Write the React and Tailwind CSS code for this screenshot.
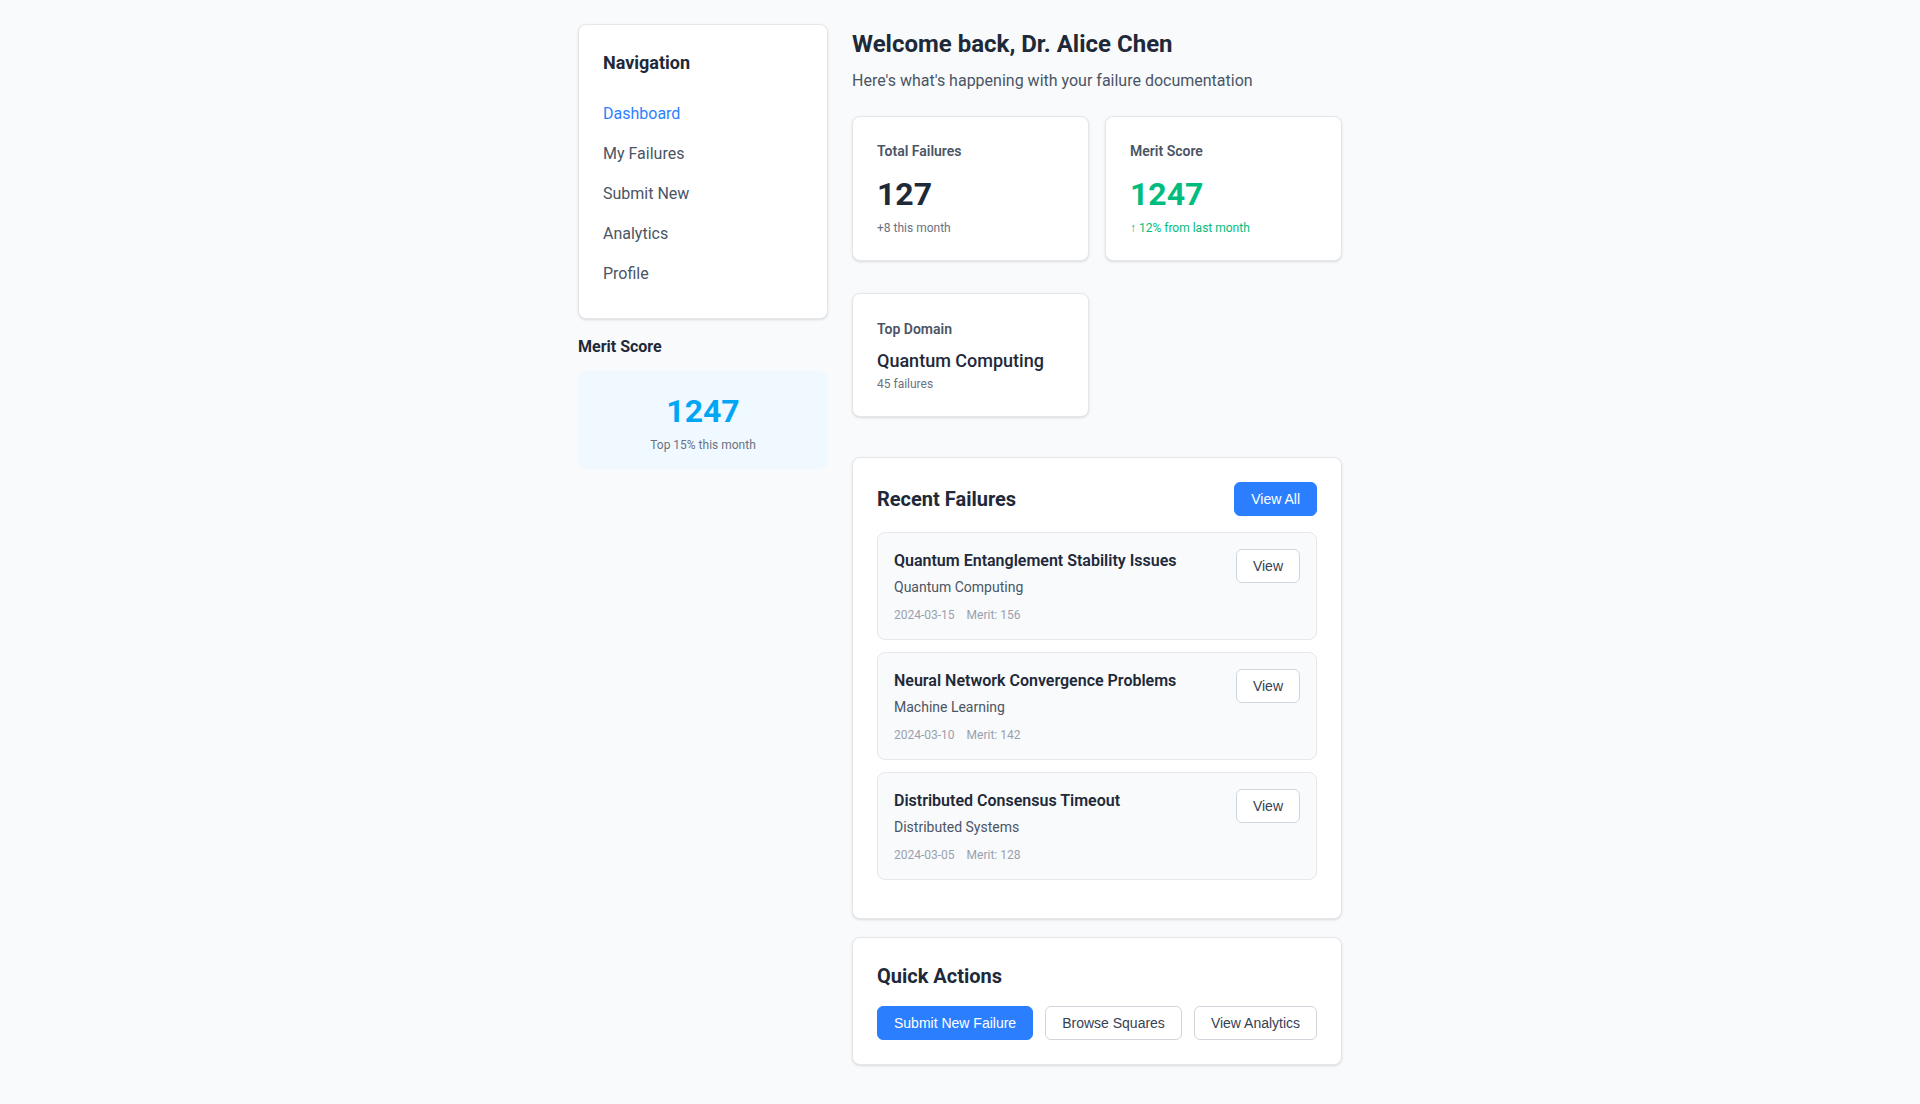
import React from "react";

const failures = [
  { title: "Quantum Entanglement Stability Issues", domain: "Quantum Computing", date: "2024-03-15", merit: 156 },
  { title: "Neural Network Convergence Problems", domain: "Machine Learning", date: "2024-03-10", merit: 142 },
  { title: "Distributed Consensus Timeout", domain: "Distributed Systems", date: "2024-03-05", merit: 128 },
];

const navItems = ["Dashboard", "My Failures", "Submit New", "Analytics", "Profile"];

export default function App() {
  return (
    <div className="min-h-screen bg-gray-50 text-gray-800 font-['Roboto','Noto_Sans',sans-serif]">
      <div className="mx-auto flex w-[764px] gap-6 pt-6 pb-10">
        <aside className="w-[250px] shrink-0">
          <div className="rounded-lg border border-gray-200 bg-white p-6 shadow-sm">
            <h2 className="mb-[17px] text-lg leading-7 font-bold text-gray-800">Navigation</h2>
            <nav className="flex flex-col">
              {navItems.map((item, i) => (
                <a
                  key={item}
                  href="#"
                  className={
                    i === 0
                      ? "py-2 text-base leading-6 text-blue-500"
                      : "py-2 text-base leading-6 text-gray-600"
                  }
                >
                  {item}
                </a>
              ))}
            </nav>
          </div>
          <h3 className="mt-4 mb-3 text-base leading-6 font-bold text-gray-800">Merit Score</h3>
          <div className="rounded-lg bg-sky-50 p-4 text-center">
            <div className="text-[32px] leading-[48px] font-bold text-sky-500">1247</div>
            <div className="mt-0.5 text-xs leading-4 text-gray-500">Top 15% this month</div>
          </div>
        </aside>

        <main className="w-[490px]">
          <h1 className="mt-1 text-2xl leading-8 font-bold text-gray-800">Welcome back, Dr. Alice Chen</h1>
          <p className="mt-[9px] mb-[23px] text-base leading-6 text-gray-600">
            Here's what's happening with your failure documentation
          </p>

          <div className="mb-10 grid grid-cols-2 gap-x-4 gap-y-8">
            <div className="rounded-lg border border-gray-200 bg-white p-6 shadow-sm">
              <div className="mb-[9px] text-sm leading-5 font-semibold text-gray-600">Total Failures</div>
              <div className="text-[32px] leading-[48px] font-bold text-gray-800">127</div>
              <div className="mt-0.5 text-xs leading-4 text-gray-500">+8 this month</div>
            </div>
            <div className="rounded-lg border border-gray-200 bg-white p-6 shadow-sm">
              <div className="mb-[9px] text-sm leading-5 font-semibold text-gray-600">Merit Score</div>
              <div className="text-[32px] leading-[48px] font-bold text-emerald-500">1247</div>
              <div className="mt-0.5 text-xs leading-4 text-emerald-500">↑ 12% from last month</div>
            </div>
            <div className="rounded-lg border border-gray-200 bg-white px-6 pt-[25px] pb-6 shadow-sm">
              <div className="mb-2 text-sm leading-5 font-semibold text-gray-600">Top Domain</div>
              <div className="text-lg leading-7 font-medium text-gray-800">Quantum Computing</div>
              <div className="mt-px text-xs leading-4 text-gray-500">45 failures</div>
            </div>
          </div>

          <section className="rounded-lg border border-gray-200 bg-white px-6 pt-6 pb-[26px] shadow-sm">
            <div className="mb-4 flex items-center justify-between">
              <h2 className="text-xl leading-7 font-bold text-gray-800">Recent Failures</h2>
              <button className="whitespace-nowrap rounded-md border border-blue-500 bg-blue-500 px-4 py-[6px] text-sm leading-5 text-white font-['Liberation_Sans',Arial,sans-serif]">
                View All
              </button>
            </div>
            {failures.map((f) => (
              <div
                key={f.title}
                className="mb-3 flex items-start justify-between rounded-lg border border-gray-200 bg-gray-50 p-4"
              >
                <div>
                  <div className="text-base leading-6 font-semibold text-gray-800">{f.title}</div>
                  <div className="mt-1 text-sm leading-5 text-gray-600">{f.domain}</div>
                  <div className="mt-2.5 flex gap-3 text-xs leading-4 text-gray-400">
                    <span>{f.date}</span>
                    <span>Merit: {f.merit}</span>
                  </div>
                </div>
                <button className="shrink-0 whitespace-nowrap rounded-md border border-gray-300 bg-white px-4 py-[6px] text-sm leading-5 text-gray-700 font-['Liberation_Sans',Arial,sans-serif]">
                  View
                </button>
              </div>
            ))}
          </section>

          <section className="mt-[18px] rounded-lg border border-gray-200 bg-white p-6 shadow-sm">
            <h2 className="mb-4 text-xl leading-7 font-bold text-gray-800">Quick Actions</h2>
            <div className="flex gap-3">
              <button className="shrink-0 whitespace-nowrap rounded-md border border-blue-500 bg-blue-500 px-4 py-[6px] text-sm leading-5 text-white font-['Liberation_Sans',Arial,sans-serif]">
                Submit New Failure
              </button>
              <button className="shrink-0 whitespace-nowrap rounded-md border border-gray-300 bg-white px-4 py-[6px] text-sm leading-5 text-gray-700 font-['Liberation_Sans',Arial,sans-serif]">
                Browse Squares
              </button>
              <button className="shrink-0 whitespace-nowrap rounded-md border border-gray-300 bg-white px-4 py-[6px] text-sm leading-5 text-gray-700 font-['Liberation_Sans',Arial,sans-serif]">
                View Analytics
              </button>
            </div>
          </section>
        </main>
      </div>
    </div>
  );
}
